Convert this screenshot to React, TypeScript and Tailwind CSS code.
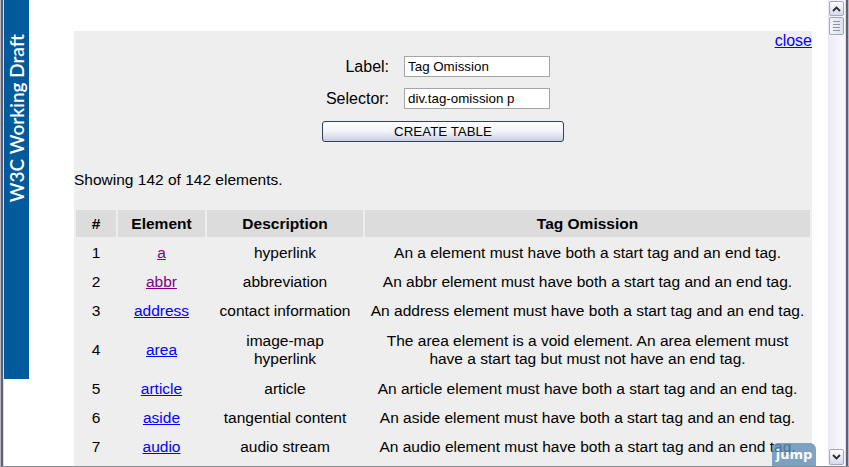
import React from "react";

type Row = {
  n: number;
  el: string;
  visited?: boolean;
  tall?: boolean;
  desc: React.ReactNode;
  tag: React.ReactNode;
};

const rows: Row[] = [
  { n: 1, el: "a", visited: true, desc: "hyperlink", tag: "An a element must have both a start tag and an end tag." },
  { n: 2, el: "abbr", visited: true, desc: "abbreviation", tag: "An abbr element must have both a start tag and an end tag." },
  { n: 3, el: "address", desc: "contact information", tag: "An address element must have both a start tag and an end tag." },
  {
    n: 4,
    el: "area",
    tall: true,
    desc: (
      <>
        image-map
        <br />
        hyperlink
      </>
    ),
    tag: (
      <>
        The area element is a void element. An area element must
        <br />
        have a start tag but must not have an end tag.
      </>
    ),
  },
  { n: 5, el: "article", desc: "article", tag: "An article element must have both a start tag and an end tag." },
  { n: 6, el: "aside", desc: "tangential content", tag: "An aside element must have both a start tag and an end tag." },
  { n: 7, el: "audio", desc: "audio stream", tag: "An audio element must have both a start tag and an end tag." },
];

function Chevron({ up }: { up?: boolean }) {
  return (
    <svg width="9" height="6" viewBox="0 0 9 6">
      <path
        d={up ? "M1 5 L4.5 1.5 L8 5" : "M1 1 L4.5 4.5 L8 1"}
        fill="none"
        stroke="#2b2b3a"
        strokeWidth="1.8"
      />
    </svg>
  );
}

export default function App() {
  return (
    <div
      className="relative flex h-[467px] w-[849px] flex-col overflow-hidden bg-white text-black"
      style={{ fontFamily: '"Liberation Sans", Arial, sans-serif' }}
    >
      <div className="flex min-h-0 flex-1">
        {/* left window frame */}
        <div className="flex w-[4px] shrink-0">
          <div className="w-[1px] bg-[#b8b8c4]" />
          <div className="w-[2px] bg-[#5e5e7a]" />
          <div className="w-[1px] bg-[#dcdce6]" />
        </div>

        {/* W3C banner */}
        <div className="w-[25px] shrink-0">
          <div className="flex h-[379px] flex-col items-center bg-[#005a9c] pt-[34px]">
            <span
              className="rotate-180 text-[19px] font-semibold leading-[25px] text-white [writing-mode:vertical-rl]"
              style={{ fontFamily: 'Lato, "Open Sans", sans-serif' }}
            >
              W3C Working Draft
            </span>
          </div>
        </div>

        {/* page content */}
        <div className="flex min-w-0 flex-1 flex-col pl-[45px] pr-[16px] pt-[31px]">
          <div className="flex flex-1 flex-col bg-[#eeeeee]">
            <div className="flex h-[25px] justify-end pt-[1px]">
              <a className="text-[16px] leading-[18px] text-[#0000ff] underline">close</a>
            </div>

            <div className="flex justify-center">
              <div className="mr-[10px] grid grid-cols-[auto_146px] items-center gap-x-[15px] gap-y-[11px] text-[16px]">
                <div className="text-right leading-[18px]">Label:</div>
                <div className="flex h-[21px] items-center border border-[#a5a5a5] bg-white px-[3px] text-[13.33px]">
                  Tag Omission
                </div>
                <div className="text-right leading-[18px]">Selector:</div>
                <div className="flex h-[21px] items-center border border-[#a5a5a5] bg-white px-[3px] text-[13.33px]">
                  div.tag-omission p
                </div>
              </div>
            </div>

            <div className="mt-[12px] flex justify-center">
              <div className="flex h-[21px] w-[242px] items-center justify-center rounded-[3px] border border-[#33405e] bg-linear-to-b from-white via-[#f2f3f8] to-[#c9cde0] text-[13.33px]">
                CREATE TABLE
              </div>
            </div>

            <div className="mt-[29px] text-[15.5px] leading-[18px]">Showing 142 of 142 elements.</div>

            <table className="mt-[19px] w-full table-fixed border-separate border-spacing-[2px] text-center text-[15.5px] leading-[18px]">
              <colgroup>
                <col className="w-[40px]" />
                <col className="w-[87px]" />
                <col className="w-[156px]" />
                <col />
              </colgroup>
              <thead>
                <tr>
                  <th className="h-[27px] bg-[#dcdcdc] p-0 font-bold">#</th>
                  <th className="h-[27px] bg-[#dcdcdc] p-0 font-bold">Element</th>
                  <th className="h-[27px] bg-[#dcdcdc] p-0 font-bold">Description</th>
                  <th className="h-[27px] bg-[#dcdcdc] p-0 font-bold">Tag Omission</th>
                </tr>
              </thead>
              <tbody>
                {rows.map((r) => {
                  const cell = r.tall ? "px-0 py-[5.5px] align-middle" : "px-0 pb-[4px] pt-[5px] align-middle";
                  return (
                    <tr key={r.n}>
                      <td className={cell}>{r.n}</td>
                      <td className={cell}>
                        <a className={r.visited ? "text-[#800080] underline" : "text-[#0000ff] underline"}>{r.el}</a>
                      </td>
                      <td className={cell}>{r.desc}</td>
                      <td className={cell}>{r.tag}</td>
                    </tr>
                  );
                })}
              </tbody>
            </table>
          </div>
        </div>

        {/* scrollbar */}
        <div className="flex w-[17px] shrink-0 flex-col bg-linear-to-r from-[#ebebf3] to-[#f9f9fd] px-[1px] pb-[1px] pt-[1px]">
          <div className="flex h-[15px] items-center justify-center rounded-[2px] border border-[#a4a7bc] bg-linear-to-b from-white to-[#d6d9e7]">
            <Chevron up />
          </div>
          <div className="mt-[1px] flex h-[18px] flex-col items-center justify-center gap-[2px] rounded-[2px] border border-[#a4a7bc] bg-linear-to-r from-[#f4f5fb] to-[#dde0ec]">
            <div className="h-[1px] w-[7px] bg-[#8d92ac]" />
            <div className="h-[1px] w-[7px] bg-[#8d92ac]" />
            <div className="h-[1px] w-[7px] bg-[#8d92ac]" />
            <div className="h-[1px] w-[7px] bg-[#8d92ac]" />
          </div>
          <div className="flex-1" />
          <div className="flex h-[16px] items-center justify-center rounded-[2px] border border-[#a4a7bc] bg-linear-to-b from-white to-[#d6d9e7]">
            <Chevron />
          </div>
        </div>

        {/* right window frame */}
        <div className="flex w-[4px] shrink-0">
          <div className="w-[1px] bg-[#dcdce6]" />
          <div className="w-[2px] bg-[#5e5e7a]" />
          <div className="w-[1px] bg-[#b8b8c4]" />
        </div>
      </div>
      <div className="h-[1px] shrink-0 bg-[#8a8a96]" />

      {/* floating jump badge */}
      <div
        className="absolute left-[772px] top-[443px] flex h-[23px] w-[44px] items-center justify-center rounded-t-[6px] bg-[#5f8db5]/80 text-[13px] font-bold text-white"
        style={{ fontFamily: '"DejaVu Sans", Verdana, sans-serif' }}
      >
        jump
      </div>
    </div>
  );
}
